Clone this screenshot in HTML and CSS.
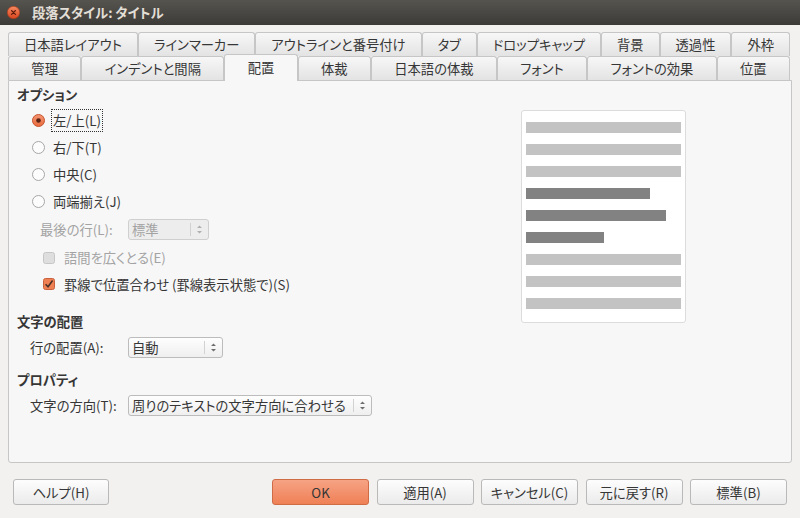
FILE: index.html
```html
<!DOCTYPE html>
<html lang="ja">
<head>
<meta charset="UTF-8">
<meta name="viewport" content="width=device-width, initial-scale=1.0">
<title>段落スタイル: タイトル</title>
<link rel="stylesheet" href="styles.css">
</head>
<body>

<div class="titlebar">
  <svg class="close" width="13" height="13" viewBox="0 0 13 13">
    <defs>
      <linearGradient id="cg" x1="0" y1="0" x2="0" y2="1">
        <stop offset="0" stop-color="#f58a62"/>
        <stop offset="1" stop-color="#d8441d"/>
      </linearGradient>
    </defs>
    <circle cx="6.5" cy="6.5" r="6.2" fill="url(#cg)" stroke="#a9391a" stroke-width="0.6"/>
    <path d="M4.6 4.6 L8.4 8.4 M8.4 4.6 L4.6 8.4" stroke="#5b1b0a" stroke-width="1.3" stroke-linecap="round"/>
  </svg>
  <span>段落スタイル: タイトル</span>
</div>

<div class="dialog">
  <div class="tabrow">
    <div class="tab">日本語レイアウト</div>
    <div class="tab">ラインマーカー</div>
    <div class="tab">アウトラインと番号付け</div>
    <div class="tab">タブ</div>
    <div class="tab">ドロップキャップ</div>
    <div class="tab">背景</div>
    <div class="tab">透過性</div>
    <div class="tab">外枠</div>
  </div>
  <div class="tabrow">
    <div class="tab">管理</div>
    <div class="tab">インデントと間隔</div>
    <div class="tab active">配置</div>
    <div class="tab">体裁</div>
    <div class="tab">日本語の体裁</div>
    <div class="tab">フォント</div>
    <div class="tab">フォントの効果</div>
    <div class="tab">位置</div>
  </div>

  <div class="panel">
    <div class="options">
      <div class="heading">オプション</div>

      <div class="radio-row first">
        <svg class="radio" width="13" height="13" viewBox="0 0 13 13">
          <defs>
            <linearGradient id="rg" x1="0" y1="0" x2="0" y2="1">
              <stop offset="0" stop-color="#f59673"/>
              <stop offset="1" stop-color="#e96a3d"/>
            </linearGradient>
          </defs>
          <circle cx="6.5" cy="6.5" r="6" fill="url(#rg)" stroke="#c4552f"/>
          <circle cx="6.5" cy="6.5" r="2.3" fill="#5a2414"/>
        </svg>
        <span class="focus">左/上(L)</span>
      </div>
      <div class="radio-row">
        <svg class="radio" width="13" height="13" viewBox="0 0 13 13">
          <circle cx="6.5" cy="6.5" r="6" fill="#fcfcfc" stroke="#a6a6a6"/>
        </svg>
        <span>右/下(T)</span>
      </div>
      <div class="radio-row">
        <svg class="radio" width="13" height="13" viewBox="0 0 13 13">
          <circle cx="6.5" cy="6.5" r="6" fill="#fcfcfc" stroke="#a6a6a6"/>
        </svg>
        <span>中央(C)</span>
      </div>
      <div class="radio-row">
        <svg class="radio" width="13" height="13" viewBox="0 0 13 13">
          <circle cx="6.5" cy="6.5" r="6" fill="#fcfcfc" stroke="#a6a6a6"/>
        </svg>
        <span>両端揃え(J)</span>
      </div>

      <div class="field lastline disabled">
        <span class="field-label">最後の行(L):</span>
        <div class="select narrow">
          <span class="select-text">標準</span>
          <span class="spin">
            <svg width="5" height="9" viewBox="0 0 5 9"><path d="M0 3 L2.5 0.5 L5 3 Z M0 6 L2.5 8.5 L5 6 Z" fill="#b0b0b0"/></svg>
          </span>
        </div>
      </div>

      <div class="check-row first disabled">
        <svg class="check" width="12" height="12" viewBox="0 0 12 12">
          <rect x="0.5" y="0.5" width="11" height="11" rx="2" fill="#dedede" stroke="#c6c6c6"/>
        </svg>
        <span>語間を広くとる(E)</span>
      </div>
      <div class="check-row">
        <svg class="check" width="12" height="12" viewBox="0 0 12 12">
          <rect x="0.5" y="0.5" width="11" height="11" rx="2" fill="#ef8054" stroke="#c9603c"/>
          <path d="M2.6 6.2 L5 8.7 L9.6 2.6" fill="none" stroke="#4a3128" stroke-width="1.6"/>
        </svg>
        <span>罫線で位置合わせ (罫線表示状態で)(S)</span>
      </div>

      <div class="heading section">文字の配置</div>
      <div class="field">
        <span class="field-label">行の配置(A):</span>
        <div class="select medium">
          <span class="select-text">自動</span>
          <span class="spin">
            <svg width="5" height="9" viewBox="0 0 5 9"><path d="M0 3 L2.5 0.5 L5 3 Z M0 6 L2.5 8.5 L5 6 Z" fill="#6e6e6e"/></svg>
          </span>
        </div>
      </div>

      <div class="heading section short">プロパティ</div>
      <div class="field">
        <span class="field-label">文字の方向(T):</span>
        <div class="select wide">
          <span class="select-text">周りのテキストの文字方向に合わせる</span>
          <span class="spin">
            <svg width="5" height="9" viewBox="0 0 5 9"><path d="M0 3 L2.5 0.5 L5 3 Z M0 6 L2.5 8.5 L5 6 Z" fill="#6e6e6e"/></svg>
          </span>
        </div>
      </div>
    </div>

    <div class="preview">
      <div class="line"></div>
      <div class="line"></div>
      <div class="line"></div>
      <div class="line dark line-a"></div>
      <div class="line dark line-b"></div>
      <div class="line dark line-c"></div>
      <div class="line"></div>
      <div class="line"></div>
      <div class="line"></div>
    </div>
  </div>

  <div class="buttons">
    <button>ヘルプ(H)</button>
    <button class="ok">OK</button>
    <button>適用(A)</button>
    <button>キャンセル(C)</button>
    <button>元に戻す(R)</button>
    <button>標準(B)</button>
  </div>
</div>

</body>
</html>
```

FILE: styles.css
```css
* {
  box-sizing: border-box;
}

body {
  margin: 0;
  width: 800px;
  height: 518px;
  overflow: hidden;
  font-family: "Noto Sans CJK JP", "Liberation Sans", sans-serif;
  font-size: 13.3px;
  font-feature-settings: "palt";
  color: #363636;
  background-color: #f2f1f0;
}

.titlebar {
  height: 25px;
  display: flex;
  align-items: center;
  padding-left: 7px;
  background: linear-gradient(#56544f, #3c3b37);
  color: #e2ded6;
  font-weight: bold;
}

.close {
  margin-right: 12px;
}

.dialog {
  padding: 7px 8px 0 8px;
}

.tabrow {
  display: flex;
  height: 24px;
  margin-right: 2px;
}

.tab {
  flex: 1 1 auto;
  display: flex;
  align-items: center;
  justify-content: center;
  padding: 0 10px;
  white-space: nowrap;
  border: 1px solid #c6c6c6;
  border-bottom: none;
  border-radius: 3px 3px 0 0;
  background: linear-gradient(#f7f7f7, #e3e3e3);
}

.tab.active {
  position: relative;
  z-index: 1;
  height: 27px;
  margin-top: -2px;
  padding-bottom: 2px;
  background: #f7f7f7;
}

.panel {
  display: flex;
  height: 383px;
  padding-top: 5px;
  border: 1px solid #c6c6c6;
  border-radius: 0 0 3px 3px;
  background-color: #f7f7f7;
}

.options {
  flex: 1;
}

.heading {
  height: 18px;
  line-height: 18px;
  padding-left: 8px;
  font-weight: bold;
}

.heading.section {
  margin-top: 16px;
}

.heading.short {
  margin-top: 12px;
}

.radio-row {
  display: flex;
  align-items: center;
  height: 27px;
  padding-left: 23px;
}

.radio-row.first {
  margin-top: 3px;
}

.radio {
  margin-right: 8px;
}

.focus {
  outline: 1px dotted #333;
  outline-offset: 1px;
}

.field {
  display: flex;
  align-items: center;
  height: 24px;
  margin-top: 4px;
  padding-left: 21px;
}

.field .field-label {
  width: 98px;
}

.field.lastline {
  height: 29px;
  margin-top: 0;
  padding-left: 31px;
}

.field.lastline .field-label {
  width: 88px;
}

.disabled {
  color: #a3a3a3;
}

.select {
  display: flex;
  align-items: center;
  height: 21px;
  border: 1px solid #bcbcbc;
  border-radius: 3px;
  background: linear-gradient(#fefefe, #efefef);
}

.select.narrow {
  width: 81px;
  background: #ededed;
  border-color: #cfcfcf;
}

.select.medium {
  width: 95px;
}

.select.wide {
  width: 244px;
}

.select-text {
  flex: 1;
  padding-left: 3px;
  white-space: nowrap;
}

.spin {
  display: flex;
  align-items: center;
  justify-content: center;
  width: 18px;
  height: 13px;
  border-left: 1px solid #d2d2d2;
}

.check-row {
  display: flex;
  align-items: center;
  height: 26px;
  padding-left: 34px;
}

.check-row.first {
  height: 27px;
}

.check {
  margin-right: 9px;
}

.preview {
  width: 165px;
  height: 213px;
  margin: 24px 105px 0 0;
  padding: 11px 4px 0 4px;
  border: 1px solid #dcdcdc;
  border-radius: 3px;
  background-color: #fff;
}

.line {
  height: 11px;
  margin-bottom: 11px;
  background-color: #c3c3c3;
}

.line.dark {
  background-color: #828282;
}

.line-a {
  width: 124px;
}

.line-b {
  width: 140px;
}

.line-c {
  width: 78px;
}

.buttons {
  display: flex;
  gap: 7.5px;
  margin-top: 16px;
  padding: 0 5px;
}

button {
  width: 97px;
  height: 26px;
  padding: 0;
  font-family: inherit;
  font-size: 13.3px;
  font-feature-settings: "palt";
  color: #363636;
  border: 1px solid #b9b9b9;
  border-radius: 3px;
  background: linear-gradient(#fdfdfd, #ebebeb);
}

button:first-child {
  width: 96px;
  margin-right: auto;
}

button.ok {
  border-color: #cf6b45;
  background: linear-gradient(#f6a384, #ef8056);
}
```
